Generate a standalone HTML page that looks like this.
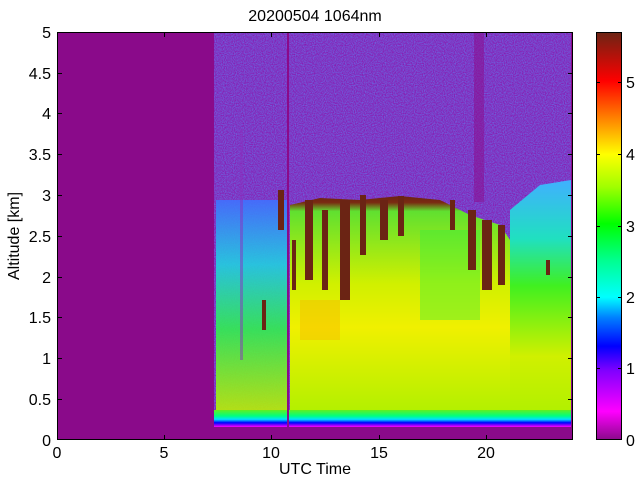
<!DOCTYPE html>
<html><head><meta charset="utf-8"><style>
html,body{margin:0;padding:0;background:#fff;width:640px;height:480px;overflow:hidden}
svg{display:block}
text{font-family:"Liberation Sans",sans-serif;font-size:16px;fill:#000}
</style></head><body>
<svg width="640" height="480" viewBox="0 0 640 480">
<defs>
<linearGradient id="cb" x1="0" y1="1" x2="0" y2="0">
<stop offset="0" stop-color="#8a0a8a"/>
<stop offset="0.07" stop-color="#ff00ff"/>
<stop offset="0.17" stop-color="#8000ff"/>
<stop offset="0.23" stop-color="#0000ff"/>
<stop offset="0.3" stop-color="#0080ff"/>
<stop offset="0.35" stop-color="#00ffff"/>
<stop offset="0.44" stop-color="#00ff90"/>
<stop offset="0.53" stop-color="#00ff00"/>
<stop offset="0.62" stop-color="#a0ff00"/>
<stop offset="0.7" stop-color="#ffff00"/>
<stop offset="0.79" stop-color="#ff8000"/>
<stop offset="0.88" stop-color="#ff0000"/>
<stop offset="1" stop-color="#6b2414"/>
</linearGradient>
<linearGradient id="gL" x1="0" y1="0" x2="0" y2="1">
<stop offset="0" stop-color="#4070ff"/>
<stop offset="0.3" stop-color="#20d0e0"/>
<stop offset="0.6" stop-color="#30f050"/>
<stop offset="1" stop-color="#c0f000"/>
</linearGradient>
<linearGradient id="gM" x1="0" y1="0" x2="0" y2="1">
<stop offset="0" stop-color="#6b2414"/>
<stop offset="0.03" stop-color="#7a2a12"/>
<stop offset="0.07" stop-color="#60e030"/>
<stop offset="0.4" stop-color="#d0f000"/>
<stop offset="0.6" stop-color="#f0f000"/>
<stop offset="1" stop-color="#b0f000"/>
</linearGradient>
<linearGradient id="gR" x1="0" y1="0" x2="0" y2="1">
<stop offset="0" stop-color="#40b0ff"/>
<stop offset="0.25" stop-color="#20e0c0"/>
<stop offset="0.45" stop-color="#40f020"/>
<stop offset="0.75" stop-color="#d0f000"/>
<stop offset="1" stop-color="#b0f000"/>
</linearGradient>
<linearGradient id="bot" x1="0" y1="0" x2="0" y2="1">
<stop offset="0" stop-color="#60f020"/>
<stop offset="0.35" stop-color="#00ff80"/>
<stop offset="0.55" stop-color="#00e0ff"/>
<stop offset="0.75" stop-color="#0000ff"/>
<stop offset="1" stop-color="#ff00ff"/>
</linearGradient>
<filter id="nz" filterUnits="userSpaceOnUse" x="214" y="32" width="357" height="395"><feTurbulence type="fractalNoise" baseFrequency="0.9" numOctaves="1" seed="3"/><feColorMatrix values="0 0 0 0 0.1  0 0 0 0 0.3  0 0 0 0 1  0 0 0 -1.6 1.2"/></filter>
</defs>
<rect x="57" y="32" width="516" height="408" fill="#8a0a8a"/>
<rect x="214" y="32" width="357" height="395" fill="#8a1ab0"/>
<rect x="214" y="32" width="357" height="395" filter="url(#nz)" opacity="0.7"/>
<rect x="216" y="200" width="72" height="215" fill="url(#gL)" opacity="0.9"/>
<rect x="240" y="130" width="3" height="230" fill="#8a30c0" opacity="0.5"/>
<path d="M290 205 L320 198 L360 200 L400 196 L440 200 L470 215 L500 225 L510 240 L510 415 L290 415 Z" fill="url(#gM)"/>
<rect x="420" y="230" width="60" height="90" fill="#30f040" opacity="0.4"/>
<rect x="300" y="300" width="40" height="40" fill="#ffb000" opacity="0.4"/>
<path d="M510 210 L540 185 L571 180 L571 415 L510 415 Z" fill="url(#gR)"/>
<g fill="#6b2414">
<rect x="262" y="300" width="4" height="30"/>
<rect x="278" y="190" width="6" height="40"/>
<rect x="292" y="240" width="4" height="50"/>
<rect x="305" y="200" width="8" height="80"/>
<rect x="322" y="210" width="6" height="80"/>
<rect x="340" y="200" width="10" height="100"/>
<rect x="360" y="195" width="6" height="60"/>
<rect x="380" y="200" width="8" height="40"/>
<rect x="398" y="196" width="6" height="40"/>
<rect x="450" y="200" width="5" height="30"/>
<rect x="468" y="210" width="8" height="60"/>
<rect x="482" y="220" width="10" height="70"/>
<rect x="498" y="225" width="7" height="60"/>
<rect x="546" y="260" width="4" height="15"/>
</g>
<rect x="214" y="410" width="357" height="17" fill="url(#bot)"/>
<rect x="287" y="32" width="2" height="395" fill="#8a0a8a"/>
<rect x="474" y="32" width="10" height="170" fill="#8a0a8a" opacity="0.5"/>
<rect x="57.5" y="32.5" width="515" height="407" fill="none" stroke="#000"/>
<g stroke="#000">
<path d="M164.5 440v-5M271.5 440v-5M379.5 440v-5M486.5 440v-5M164.5 32v5M271.5 32v5M379.5 32v5M486.5 32v5"/>
<path d="M57 399.5h5M57 358.5h5M57 317.5h5M57 277.5h5M57 236.5h5M57 195.5h5M57 154.5h5M57 113.5h5M57 73.5h5M573 399.5h-5M573 358.5h-5M573 317.5h-5M573 277.5h-5M573 236.5h-5M573 195.5h-5M573 154.5h-5M573 113.5h-5M573 73.5h-5"/>
</g>
<g text-anchor="middle">
<text x="57" y="458">0</text><text x="164" y="458">5</text><text x="271" y="458">10</text><text x="379" y="458">15</text><text x="486" y="458">20</text>
<text x="315" y="474">UTC Time</text>
<text x="315" y="21">20200504 1064nm</text>
</g>
<g text-anchor="end">
<text x="51" y="446">0</text><text x="51" y="405">0.5</text><text x="51" y="364">1</text><text x="51" y="323">1.5</text><text x="51" y="283">2</text><text x="51" y="242">2.5</text><text x="51" y="201">3</text><text x="51" y="160">3.5</text><text x="51" y="119">4</text><text x="51" y="79">4.5</text><text x="51" y="38">5</text>
</g>
<text transform="translate(19 236) rotate(-90)" text-anchor="middle">Altitude [km]</text>
<rect x="596" y="32" width="26" height="408" fill="url(#cb)"/>
<rect x="596.5" y="32.5" width="25" height="407" fill="none" stroke="#000"/>
<g stroke="#000"><path d="M622 368.5h-4M622 297.5h-4M622 226.5h-4M622 154.5h-4M622 82.5h-4M596 368.5h4M596 297.5h4M596 226.5h4M596 154.5h4M596 82.5h4"/></g>
<g><text x="626" y="446">0</text><text x="626" y="374">1</text><text x="626" y="303">2</text><text x="626" y="232">3</text><text x="626" y="160">4</text><text x="626" y="88">5</text></g>
</svg>
</body></html>
